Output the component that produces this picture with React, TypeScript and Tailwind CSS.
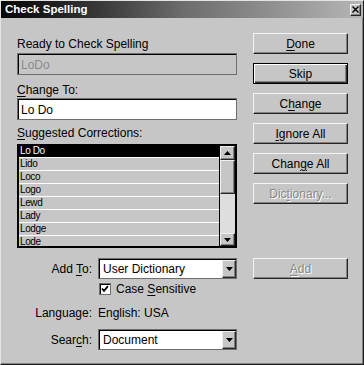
import React from "react";

const U = ({ children }: { children: React.ReactNode }) => (
  <span className="underline decoration-1 underline-offset-[2px]">{children}</span>
);

function Btn({
  children,
  def,
  disabled,
  className = "",
}: {
  children: React.ReactNode;
  def?: boolean;
  disabled?: boolean;
  className?: string;
}) {
  const edge = def
    ? "border border-black shadow-[inset_1px_1px_0_0_#ffffff,inset_-1px_-1px_0_0_#303030,inset_-2px_-2px_0_0_#808080]"
    : "border border-t-[#f4f4f4] border-l-[#f4f4f4] border-r-[#262626] border-b-[#262626] shadow-[inset_-1px_-1px_0_0_#808080]";
  const txt = disabled ? "text-[#8a8a8a] [text-shadow:1px_1px_0_#ffffff]" : "text-black";
  return (
    <div
      className={`h-[21px] w-[95px] shrink-0 flex items-center justify-center text-[12px] leading-[14px] bg-[#c6c6c6] ${edge} ${txt} ${className}`}
    >
      <span>{children}</span>
    </div>
  );
}

const Tri = ({ up }: { up?: boolean }) => (
  <svg width="7" height="4" viewBox="0 0 7 4">
    <polygon points={up ? "3.5,0 7,4 0,4" : "0,0 7,0 3.5,4"} fill="#000" />
  </svg>
);

const raised =
  "bg-[#c6c6c6] border border-t-[#f0f0f0] border-l-[#f0f0f0] border-r-[#262626] border-b-[#262626] shadow-[inset_-1px_-1px_0_0_#808080]";

const sunken = "border border-[#6e6e6e] shadow-[inset_1px_1px_0_0_#000000]";

function Select({ value }: { value: string }) {
  return (
    <div className={`h-[21px] w-[139px] bg-white flex items-stretch ${sunken} pt-px pl-px`}>
      <div className="flex-1 flex items-center pl-[3px] text-[12px] leading-[14px] text-black whitespace-nowrap overflow-hidden">
        {value}
      </div>
      <div className={`w-[14px] flex items-center justify-center ${raised}`}>
        <Tri />
      </div>
    </div>
  );
}

const items = ["Lo Do", "Lido", "Loco", "Logo", "Lewd", "Lady", "Lodge", "Lode"];

export default function App() {
  return (
    <div className="w-[364px] h-[365px] bg-[#c6c6c6] border-t border-l border-t-[#e4e4e4] border-l-[#e4e4e4] border-r border-b border-r-[#1e1e1e] border-b-[#1e1e1e] shadow-[inset_-1px_-1px_0_0_#808080] flex flex-col font-['Liberation_Sans',Arial,sans-serif] text-black overflow-hidden">
      {/* title bar */}
      <div className="h-[17px] shrink-0 flex items-center justify-between pl-[4px] pr-[2px] bg-linear-to-r from-[#060606] via-[#6c6c6c] to-[#b6b6b6]">
        <span className="text-white font-bold text-[11.5px] leading-[13px]">Check Spelling</span>
        <div className={`w-[11px] h-[12px] flex items-center justify-center ${raised}`}>
          <svg width="7" height="7" viewBox="0 0 7 7">
            <path d="M0.5 0.5L6.5 6.5M6.5 0.5L0.5 6.5" stroke="#000" strokeWidth="1.4" />
          </svg>
        </div>
      </div>

      <div className="flex pl-[16px]">
        {/* left column */}
        <div className="w-[220px] flex flex-col">
          <div className="mt-[19px] text-[12px] leading-[14px]">Ready to Check Spelling</div>
          <div className={`mt-[2px] h-[22px] flex items-center pl-[3px] pt-px ${sunken} bg-[#c6c6c6] text-[12px] leading-[14px] text-[#8a8a8a]`}>
            LoDo
          </div>
          <div className="mt-[8px] text-[12px] leading-[14px]">
            <U>C</U>hange To:
          </div>
          <div className={`mt-[1px] h-[22px] flex items-center pl-[3px] pt-px ${sunken} bg-white text-[12px] leading-[14px]`}>
            Lo Do
          </div>
          <div className="mt-[6px] text-[12px] leading-[14px]">
            <U>S</U>uggested Corrections:
          </div>
          <div className="mt-[4px] h-[104px] border-2 border-black flex bg-[#c6c6c6] overflow-hidden">
            <div className="flex-1 flex flex-col -mt-px border-r border-black">
              {items.map((t, i) => (
                <div
                  key={t}
                  className={`h-[13px] shrink-0 border-b border-white pl-px text-[10px] leading-[12px] tracking-[-0.4px] ${
                    i === 0 ? "bg-black text-white" : "text-black"
                  }`}
                >
                  {t}
                </div>
              ))}
            </div>
            <div className="w-[15px] flex flex-col">
              <div className={`h-[14px] shrink-0 flex items-center justify-center ${raised}`}>
                <Tri up />
              </div>
              <div className={`h-[34px] shrink-0 ${raised}`} />
              <div className="flex-1 bg-[#dedede]" />
              <div className={`h-[13px] shrink-0 flex items-center justify-center ${raised}`}>
                <Tri />
              </div>
            </div>
          </div>

          {/* Add To */}
          <div className="mt-[10px] flex items-center gap-[6px]">
            <div className="w-[75px] text-right text-[12px] leading-[14px]">
              Add <U>T</U>o:
            </div>
            <Select value="User Dictionary" />
          </div>

          {/* Case sensitive */}
          <div className="mt-[3px] h-[13px] flex items-center pl-[82px] gap-[5px]">
            <div className={`w-[12px] h-[12px] bg-white flex items-center justify-center ${sunken}`}>
              <svg width="8" height="8" viewBox="0 0 8 8">
                <path d="M1 3.5L3 5.8L7 1.2" stroke="#000" strokeWidth="1.8" fill="none" />
              </svg>
            </div>
            <span className="text-[12px] leading-[14px]">
              Case <U>S</U>ensitive
            </span>
          </div>

          {/* Language */}
          <div className="mt-[11px] flex items-center gap-[6px] text-[12px] leading-[14px]">
            <div className="w-[75px] text-right">Language:</div>
            <div>English: USA</div>
          </div>

          {/* Search */}
          <div className="mt-[9px] flex items-center gap-[6px]">
            <div className="w-[75px] text-right text-[12px] leading-[14px]">
              Sear<U>c</U>h:
            </div>
            <Select value="Document" />
          </div>
        </div>

        {/* right column */}
        <div className="ml-[16px] flex flex-col">
          <Btn className="mt-[15px]">
            <U>D</U>one
          </Btn>
          <Btn def className="mt-[9px]">
            Skip
          </Btn>
          <Btn className="mt-[9px]">
            C<U>h</U>ange
          </Btn>
          <Btn className="mt-[9px]">
            <U>I</U>gnore All
          </Btn>
          <Btn className="mt-[9px]">
            Chan<U>g</U>e All
          </Btn>
          <Btn disabled className="mt-[9px]">
            Dic<U>t</U>ionary...
          </Btn>
          <Btn disabled className="mt-[54px]">
            <U>A</U>dd
          </Btn>
        </div>
      </div>
    </div>
  );
}
